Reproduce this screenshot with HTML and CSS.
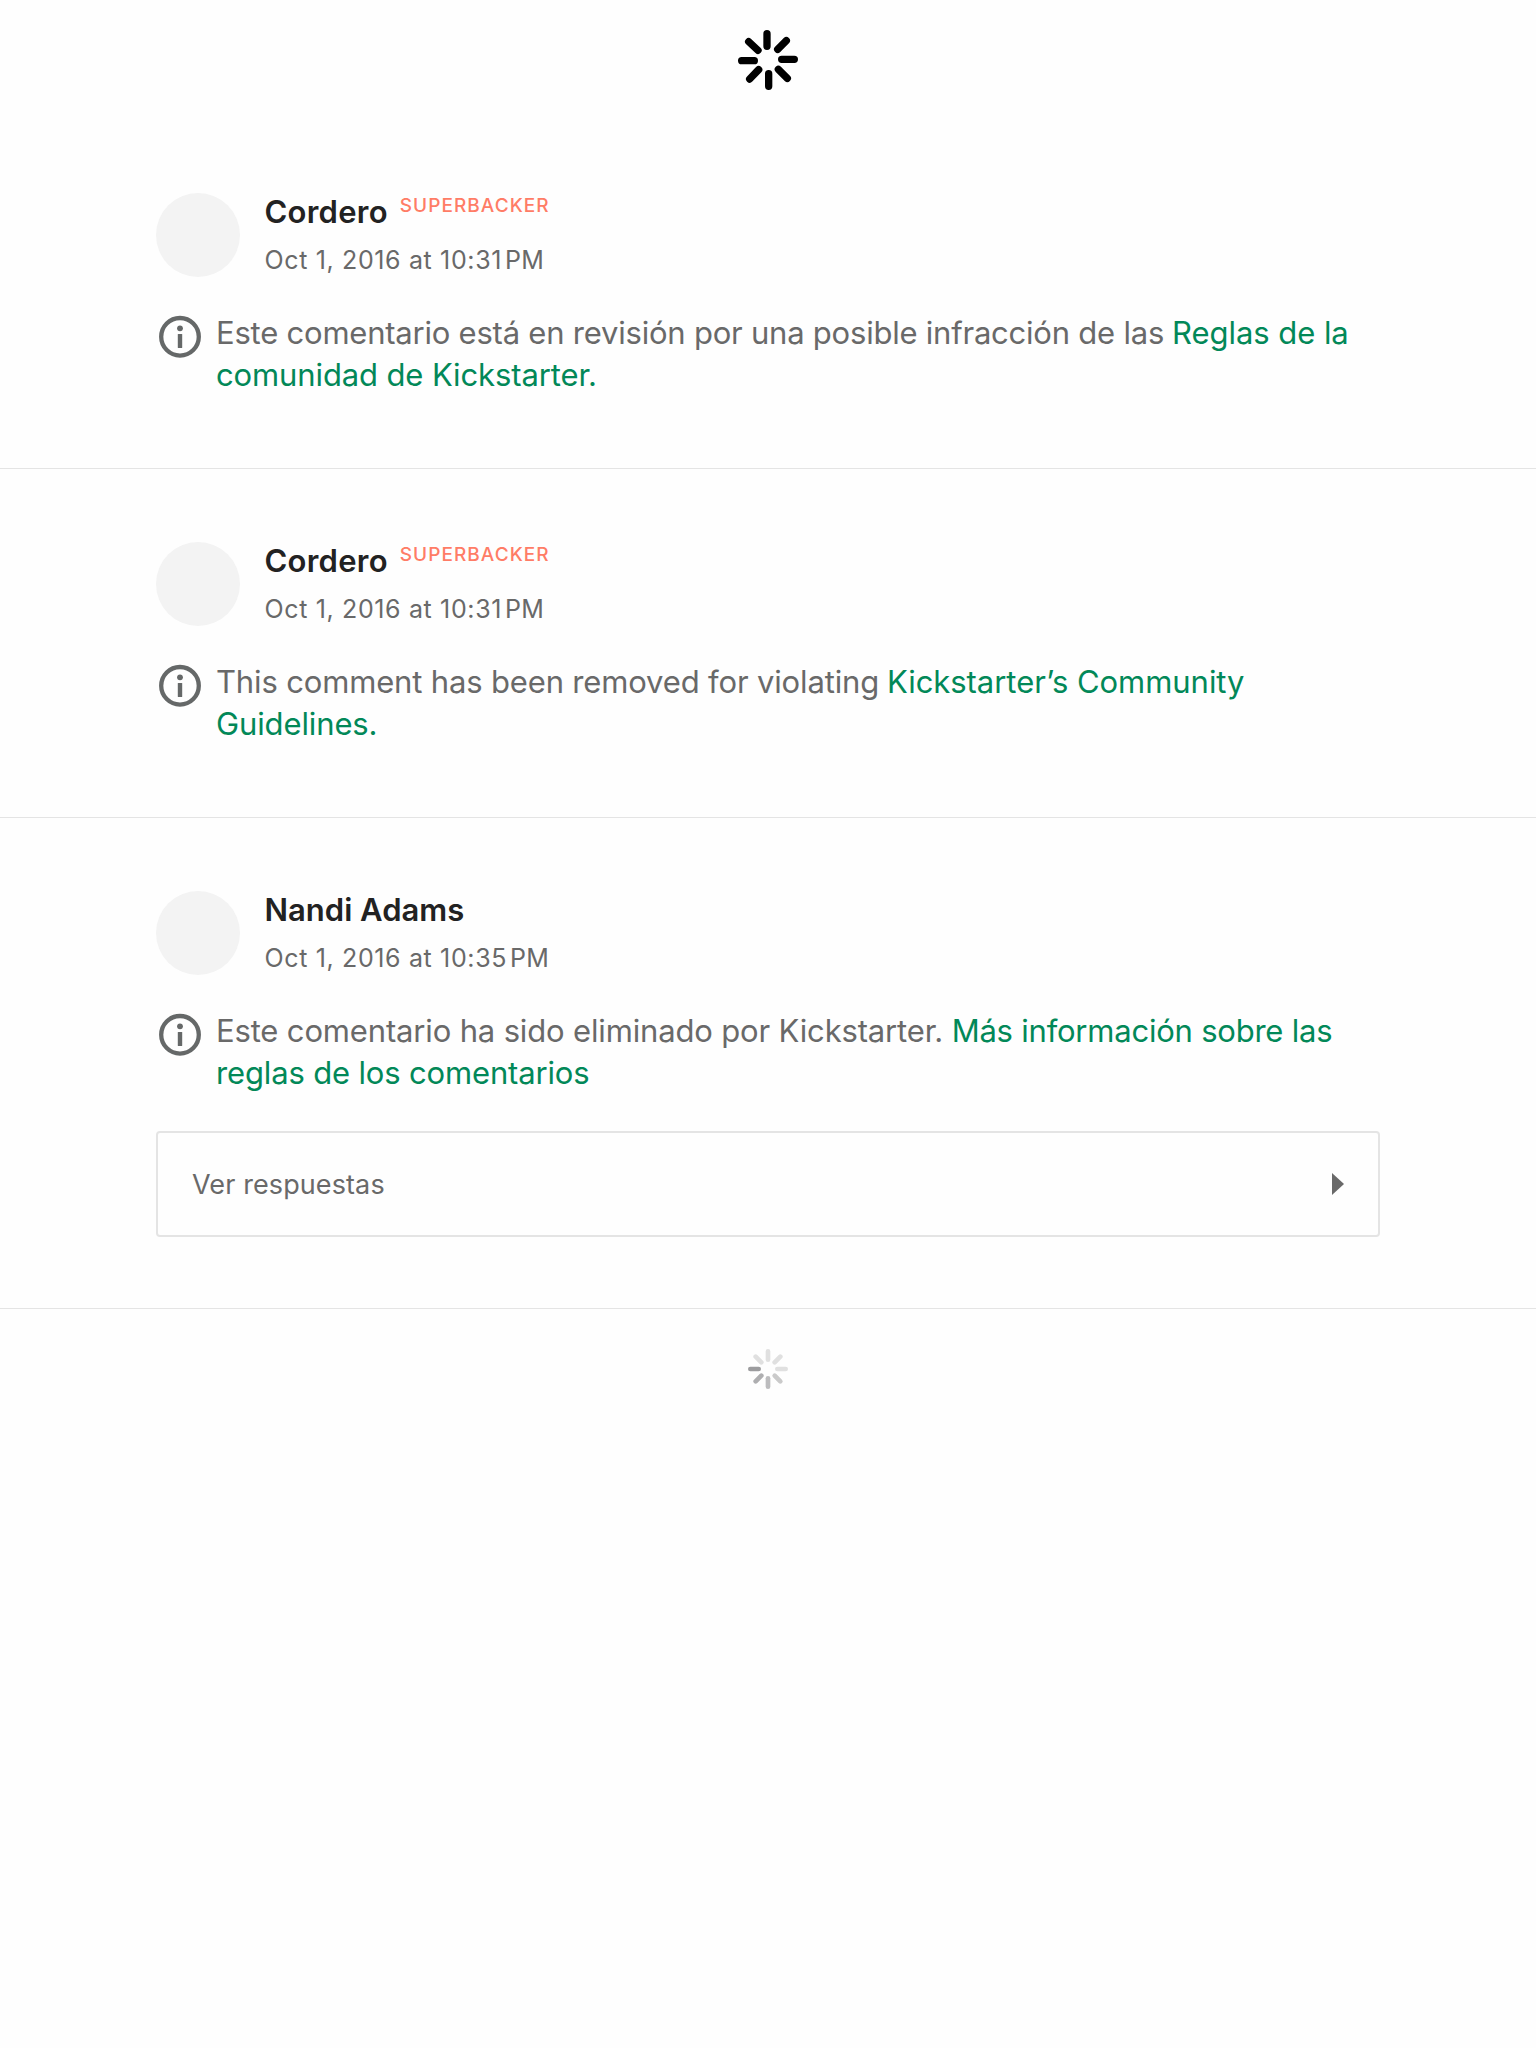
FILE: index.html
```
<!DOCTYPE html>
<html lang="es">
<head>
<meta charset="utf-8">
<title>Comentarios</title>
<link rel="stylesheet" href="styles.css">
</head>
<body>
<header class="refresh">
  <svg class="spinner" viewBox="0 0 240 240" stroke="#000" stroke-width="22" stroke-linecap="round">
    <path d="M117 41V79M175 62L149 88M161 118H199M151 148L178 175M122 161V199M92 149L65 177M41 122H79M90 91L62 65"/>
  </svg>
</header>
<main>
  <article class="comment">
    <div class="head">
      <div class="avatar"></div>
      <div class="meta">
        <div class="author"><span class="name">Cordero</span><span class="badge">SUPERBACKER</span></div>
        <div class="date">Oct 1, 2016 at 10:31<span class="pm">PM</span></div>
      </div>
    </div>
    <div class="notice">
      <svg class="info" viewBox="0 0 48 48"><circle cx="24" cy="23.8" r="18.8" fill="none" stroke="#656868" stroke-width="4.3"/><circle cx="24" cy="15.3" r="2.9" fill="#656868"/><rect x="21.8" y="21" width="4.4" height="14" rx=".5" fill="#656868"/></svg>
      <p class="text"><span class="tight">Este comentario está en revisión por una posible infracción de las</span> <a class="link shift">Reglas de la</a><br><a class="link snug">comunidad de Kickstarter.</a></p>
    </div>
  </article>
  <article class="comment">
    <div class="head">
      <div class="avatar"></div>
      <div class="meta">
        <div class="author"><span class="name">Cordero</span><span class="badge">SUPERBACKER</span></div>
        <div class="date">Oct 1, 2016 at 10:31<span class="pm">PM</span></div>
      </div>
    </div>
    <div class="notice">
      <svg class="info" viewBox="0 0 48 48"><circle cx="24" cy="23.8" r="18.8" fill="none" stroke="#656868" stroke-width="4.3"/><circle cx="24" cy="15.3" r="2.9" fill="#656868"/><rect x="21.8" y="21" width="4.4" height="14" rx=".5" fill="#656868"/></svg>
      <p class="text">This comment has been removed for violating <a class="link shift">Kickstarter’s Community</a><br><a class="link snug">Guidelines.</a></p>
    </div>
  </article>
  <article class="comment with-replies">
    <div class="head">
      <div class="avatar"></div>
      <div class="meta">
        <div class="author"><span class="name long">Nandi Adams</span></div>
        <div class="date">Oct 1, 2016 at 10:35<span class="pm">PM</span></div>
      </div>
    </div>
    <div class="notice">
      <svg class="info" viewBox="0 0 48 48"><circle cx="24" cy="23.8" r="18.8" fill="none" stroke="#656868" stroke-width="4.3"/><circle cx="24" cy="15.3" r="2.9" fill="#656868"/><rect x="21.8" y="21" width="4.4" height="14" rx=".5" fill="#656868"/></svg>
      <p class="text">Este comentario ha sido eliminado por Kickstarter. <a class="link tight">Más información sobre las</a><br><a class="link">reglas de los comentarios</a></p>
    </div>
    <div class="replies">
      <span>Ver respuestas</span>
      <svg class="arrow" viewBox="0 0 12 22"><path d="M0 0L12 11L0 22Z" fill="#696969"/></svg>
    </div>
  </article>
</main>
<footer class="more">
  <svg class="spinner" viewBox="0 0 240 240" stroke-width="14" stroke-linecap="round">
    <path stroke="#e0e0e0" d="M120 64V89M83 80L100 97M157 80L140 97M148 117H173"/>
    <path stroke="#cacaca" d="M140 137L157 154"/>
    <path stroke="#bcbcbe" d="M120 145V170"/>
    <path stroke="#aeaeb0" d="M100 137L83 154"/>
    <path stroke="#9c9c9e" d="M67 117H92"/>
  </svg>
</footer>
</body>
</html>
```
FILE: styles.css
```
* { box-sizing: border-box; }
body {
  margin: 0;
  background: #fefefe;
  color: #696969;
  font-family: Inter, "Liberation Sans", sans-serif;
}
svg { display: block; flex: none; }
.refresh {
  display: flex;
  justify-content: center;
  height: 120px;
  padding-top: 20px;
}
.spinner { width: 80px; height: 80px; fill: none; }
.comment {
  padding: 72px 156px 72px;
  border-bottom: 1px solid #e4e4e4;
}
.with-replies { padding-bottom: 71px; }
.head { display: flex; gap: 24px; }
.avatar {
  width: 84px;
  height: 84px;
  margin-top: 1px;
  border-radius: 50%;
  background: #f3f3f3;
}
.meta { padding-left: .5px; }
.author { display: flex; height: 40px; gap: 12px; }
.name {
  font-size: 31px;
  font-weight: 600;
  line-height: 40px;
  letter-spacing: .25px;
  color: #222;
}
.long { letter-spacing: 0; }
.badge {
  margin-top: 2px;
  font-size: 19px;
  font-weight: 550;
  line-height: 24px;
  letter-spacing: 1.05px;
  color: #ff7c66;
}
.date {
  margin-top: 13px;
  font-size: 25px;
  line-height: 30px;
  letter-spacing: .64px;
}
.pm { margin-left: 3px; letter-spacing: .3px; }
.notice { display: flex; gap: 12px; margin-top: 35px; }
.info { width: 48px; height: 48px; margin-top: 1px; }
.text {
  margin: 0;
  font-size: 31px;
  line-height: 42px;
  letter-spacing: -.155px;
  white-space: nowrap;
}
.link { color: #028858; }
.tight { letter-spacing: -.22px; }
.snug { letter-spacing: -.12px; }
.shift { margin-left: -.7px; letter-spacing: -.04px; }
.replies {
  display: flex;
  align-items: center;
  justify-content: space-between;
  height: 106px;
  margin-top: 37px;
  padding: 0 34px;
  border: 2px solid #e4e4e4;
  border-radius: 4px;
  font-size: 27px;
  letter-spacing: .1px;
}
.arrow { width: 12px; height: 22px; }
.more { display: flex; justify-content: center; padding-top: 21px; }
```
